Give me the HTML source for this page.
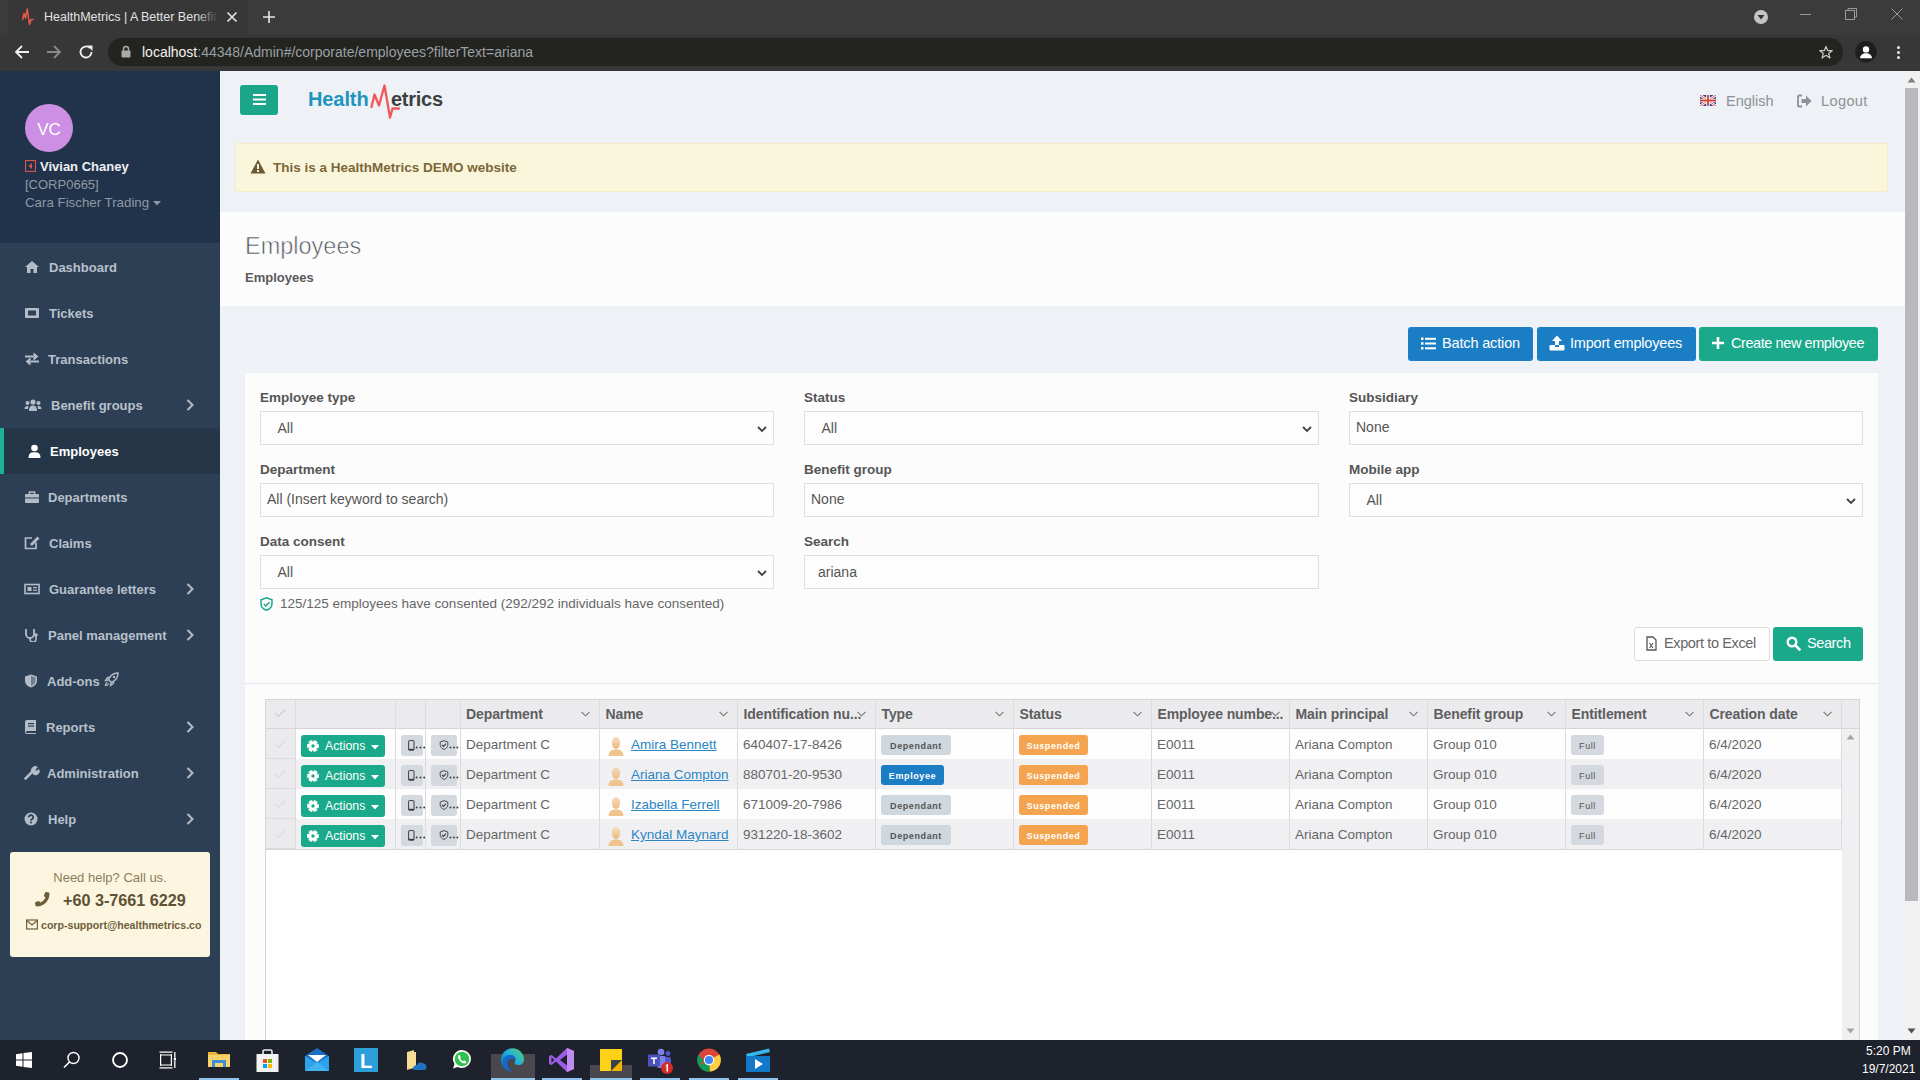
<!DOCTYPE html>
<html><head><meta charset="utf-8">
<style>
*{box-sizing:border-box;margin:0;padding:0}
html,body{width:1920px;height:1080px;overflow:hidden;font-family:"Liberation Sans",sans-serif;background:#f1f3f6}
.a{position:absolute}
.t{position:absolute;white-space:nowrap;line-height:1}
/* chrome */
#tabs{left:0;top:0;width:1920px;height:35px;background:#3a3b3a}
#tool{left:0;top:35px;width:1920px;height:36px;background:#363736}
#url{left:108px;top:38px;width:1735px;height:28px;border-radius:14px;background:#23231f}
/* sidebar */
#side{left:0;top:71px;width:220px;height:969px;background:#2d3f54}
#prof{left:0;top:71px;width:220px;height:172px;background:#20334a}
.mi{position:absolute;left:0;width:220px;height:46px;color:#b8c0cb;font-size:13px;font-weight:bold}
.mi .ic{position:absolute;left:24px;top:16px;width:16px;height:14px}
.mi .tx{position:absolute;left:49px;top:17px;line-height:1}
.mi .ch{position:absolute;left:184px;top:16px;width:12px;height:14px}
/* main */
#main{left:220px;top:71px;width:1685px;height:969px;background:#eef1f5}
#taskbar{left:0;top:1040px;width:1920px;height:40px;background:#1e222c}
.lb{font-size:13.5px;font-weight:bold;color:#555}
.inp{position:absolute;height:34px;border:1px solid #dfdfe2;background:#fdfdfd}
.inp span{position:absolute;top:10px;font-size:14px;color:#555;line-height:1;white-space:nowrap}
.inp .chv{position:absolute;right:6px;top:14px;width:10px;height:7px}
.th{font-size:14px;font-weight:bold;color:#5e5e5e;letter-spacing:-0.1px}
.td{font-size:13.5px;color:#666}
.lk{color:#2a86c4;text-decoration:underline}
.act{left:301px;width:84px;height:22px;border-radius:3px;background:#1aa98b}
.ib{height:20.5px;border-radius:3px;background:#d4d9e0}
.bd{height:20px;border-radius:3px;font-size:9px;font-weight:bold;text-align:center;line-height:22.5px;white-space:nowrap;letter-spacing:0.6px}
</style></head><body>

<div id="tabs" class="a"></div>
<div class="a" style="left:8px;top:0;width:240px;height:35px;background:#363736"></div>
<svg class="a" style="left:19px;top:6px" width="18" height="22" viewBox="19 6 18 22"><path d="M22.5 20L24 13.5L25.5 18L27.2 9L29.5 24.5L31 19.5H33.5" fill="none" stroke="#e85a4a" stroke-width="1.5" stroke-linejoin="round"/></svg>
<div class="t" style="left:44px;top:11px;font-size:12.5px;color:#e3e3e3;width:172px;overflow:hidden">HealthMetrics | A Better Benefits</div>
<div class="a" style="left:196px;top:5px;width:22px;height:25px;background:linear-gradient(90deg,rgba(54,55,54,0),#363736)"></div>
<svg class="a" style="left:226px;top:11px" width="12" height="12" viewBox="0 0 12 12"><path d="M1.5 1.5L10.5 10.5M10.5 1.5L1.5 10.5" stroke="#e8e8e8" stroke-width="1.6"/></svg>
<svg class="a" style="left:262px;top:10px" width="14" height="14" viewBox="0 0 14 14"><path d="M7 1V13M1 7H13" stroke="#e8e8e8" stroke-width="1.6"/></svg>
<svg class="a" style="left:1753px;top:9px" width="16" height="16" viewBox="0 0 16 16"><circle cx="8" cy="8" r="7" fill="#c4c4c4"/><path d="M4.5 6H11.5L8 10.5Z" fill="#333"/></svg>
<div class="a" style="left:1800px;top:14px;width:11px;height:1px;background:#999"></div>
<svg class="a" style="left:1845px;top:8px" width="12" height="12" viewBox="0 0 12 12"><path d="M3 2.5V0.5H11.5V9H9.5" fill="none" stroke="#999" stroke-width="1"/><rect x="0.5" y="2.5" width="9" height="9" fill="none" stroke="#999" stroke-width="1"/></svg>
<svg class="a" style="left:1891px;top:8px" width="12" height="12" viewBox="0 0 12 12"><path d="M0.5 0.5L11.5 11.5M11.5 0.5L0.5 11.5" stroke="#999" stroke-width="1"/></svg>
<div id="tool" class="a"></div>
<svg class="a" style="left:14px;top:44px" width="16" height="16" viewBox="0 0 16 16"><path d="M15 8H2M8 2L2 8L8 14" fill="none" stroke="#f0f0f0" stroke-width="1.8"/></svg>
<svg class="a" style="left:46px;top:44px" width="16" height="16" viewBox="0 0 16 16"><path d="M1 8H14M8 2L14 8L8 14" fill="none" stroke="#8a8a8a" stroke-width="1.8"/></svg>
<svg class="a" style="left:78px;top:44px" width="16" height="16" viewBox="0 0 16 16"><path d="M13.5 8A5.5 5.5 0 1 1 11.8 4" fill="none" stroke="#f0f0f0" stroke-width="1.8"/><path d="M9 1.5H14.5V7Z" fill="#f0f0f0"/></svg>
<div id="url" class="a"></div>
<svg class="a" style="left:121px;top:45px" width="10" height="13" viewBox="0 0 10 13"><path d="M2.5 6V4A2.5 2.5 0 0 1 7.5 4V6" fill="none" stroke="#aaa" stroke-width="1.5"/><rect x="0.5" y="5.5" width="9" height="7" rx="1" fill="#aaa"/></svg>
<div class="t" style="left:142px;top:45px;font-size:14px;color:#f2f2f2">localhost<span style="color:#9aa0a6">:44348/Admin#/corporate/employees?filterText=ariana</span></div>
<svg class="a" style="left:1818px;top:45px" width="16" height="15" viewBox="0 0 16 16"><path d="M8 1.5L9.9 6.1H14.6L10.8 9L12.2 13.8L8 11L3.8 13.8L5.2 9L1.4 6.1H6.1Z" fill="none" stroke="#c8c8c8" stroke-width="1.3" stroke-linejoin="round"/></svg>
<svg class="a" style="left:1855px;top:41px" width="22" height="22" viewBox="0 0 22 22"><circle cx="11" cy="10.7" r="10.7" fill="#1e1e1e"/><circle cx="11" cy="8.4" r="3.2" fill="#fff"/><path d="M5 17.3C5.3 13.8 7.8 12.3 11 12.3S16.7 13.8 17 17.3Z" fill="#fff"/></svg>
<svg class="a" style="left:1895px;top:45px" width="7" height="15" viewBox="0 0 7 15"><circle cx="3.5" cy="2.6" r="1.5" fill="#eee"/><circle cx="3.5" cy="7.6" r="1.5" fill="#eee"/><circle cx="3.5" cy="12.6" r="1.5" fill="#eee"/></svg>

<div id="side" class="a"></div>
<div id="prof" class="a"></div>
<div class="a" style="left:25px;top:104px;width:48px;height:48px;border-radius:50%;background:#cc8fe4"></div>
<div class="t" style="left:25px;top:121px;width:48px;text-align:center;font-size:17px;color:#fff">VC</div>
<svg class="a" style="left:25px;top:160px" width="11" height="12" viewBox="0 0 11 12"><rect x="0.5" y="0.5" width="10" height="11" fill="none" stroke="#d9534f" stroke-width="1.2"/><path d="M7 3L3.5 6L7 9Z" fill="#d9534f"/></svg>
<div class="t" style="left:40px;top:160px;font-size:13px;font-weight:bold;color:#eef0f2">Vivian Chaney</div>
<div class="t" style="left:25px;top:178px;font-size:13px;color:#8f99a5">[CORP0665]</div>
<div class="t" style="left:25px;top:196px;font-size:13.3px;color:#8f99a5">Cara Fischer Trading</div>
<svg class="a" style="left:153px;top:201px" width="8" height="5" viewBox="0 0 8 5"><path d="M0 0H8L4 4.5Z" fill="#8f99a5"/></svg>

<div class="mi" style="top:244px"><svg class="ic" viewBox="0 0 16 14"><path d="M8 1L1 7H3V13H6.5V9H9.5V13H13V7H15Z" fill="#b4bcc8"/></svg><span class="tx" style="left:49px">Dashboard</span></div>
<div class="mi" style="top:290px"><svg class="ic" viewBox="0 0 16 14"><rect x="1" y="2" width="14" height="10" rx="1" fill="#b4bcc8"/><rect x="4" y="4.5" width="8" height="5" fill="#2d3f54"/></svg><span class="tx" style="left:49px">Tickets</span></div>
<div class="mi" style="top:336px"><svg class="ic" viewBox="0 0 16 14"><path d="M1 4.5H12M9.5 1.5L13 4.5L9.5 7.5M15 9.5H4M6.5 6.5L3 9.5L6.5 12.5" fill="none" stroke="#b4bcc8" stroke-width="1.8"/></svg><span class="tx" style="left:48px">Transactions</span></div>
<div class="mi" style="top:382px"><svg class="ic" style="width:18px" viewBox="0 0 18 14"><circle cx="9" cy="4" r="2.6" fill="#b4bcc8"/><circle cx="3.5" cy="5" r="2" fill="#b4bcc8"/><circle cx="14.5" cy="5" r="2" fill="#b4bcc8"/><path d="M5 13C5 9 6.5 7.5 9 7.5S13 9 13 13Z M0.5 11C0.5 8.5 2 7.8 4.5 8L4 11Z M17.5 11C17.5 8.5 16 7.8 13.5 8L14 11Z" fill="#b4bcc8"/></svg><span class="tx" style="left:51px">Benefit groups</span><svg class="ch" viewBox="0 0 12 14"><path d="M3.5 2L8.5 7L3.5 12" fill="none" stroke="#b4bcc8" stroke-width="2"/></svg></div>
<div class="mi" style="top:428px;background:#253649;color:#fff"><div class="a" style="left:0;top:0;width:4px;height:46px;background:#1bb394"></div><svg class="ic" style="left:28px;width:13px" viewBox="0 0 13 14"><circle cx="6.5" cy="4" r="3.3" fill="#fff"/><path d="M0.5 14C0.5 9.5 2.5 8.3 6.5 8.3S12.5 9.5 12.5 14Z" fill="#fff"/></svg><span class="tx" style="left:50px">Employees</span></div>
<div class="mi" style="top:474px"><svg class="ic" viewBox="0 0 16 14"><rect x="1" y="4" width="14" height="9" rx="1" fill="#b4bcc8"/><path d="M5.5 4V2H10.5V4" fill="none" stroke="#b4bcc8" stroke-width="1.5"/><rect x="1" y="7.5" width="14" height="1" fill="#2d3f54"/></svg><span class="tx" style="left:48px">Departments</span></div>
<div class="mi" style="top:520px"><svg class="ic" viewBox="0 0 16 14"><path d="M12 6.5V12.5H1.5V2H8" fill="none" stroke="#b4bcc8" stroke-width="1.7"/><path d="M13.5 0.5L15.5 2.5L8.5 9.5H6.5V7.5Z" fill="#b4bcc8"/></svg><span class="tx" style="left:49px">Claims</span></div>
<div class="mi" style="top:566px"><svg class="ic" viewBox="0 0 16 14"><rect x="1" y="2.5" width="14" height="9" fill="none" stroke="#b4bcc8" stroke-width="1.6"/><rect x="3.5" y="5" width="4" height="4" fill="#b4bcc8"/><rect x="9" y="5" width="4" height="1.2" fill="#b4bcc8"/><rect x="9" y="7.6" width="4" height="1.2" fill="#b4bcc8"/></svg><span class="tx" style="left:49px">Guarantee letters</span><svg class="ch" viewBox="0 0 12 14"><path d="M3.5 2L8.5 7L3.5 12" fill="none" stroke="#b4bcc8" stroke-width="2"/></svg></div>
<div class="mi" style="top:612px"><svg class="ic" viewBox="0 0 16 14"><path d="M2 1V6A4 4 0 0 0 10 6V1" fill="none" stroke="#b4bcc8" stroke-width="1.8"/><path d="M6 10V11A3 3 0 0 0 12 11V8" fill="none" stroke="#b4bcc8" stroke-width="1.6"/><circle cx="12" cy="7" r="1.8" fill="#b4bcc8"/></svg><span class="tx" style="left:48px">Panel management</span><svg class="ch" viewBox="0 0 12 14"><path d="M3.5 2L8.5 7L3.5 12" fill="none" stroke="#b4bcc8" stroke-width="2"/></svg></div>
<div class="mi" style="top:658px"><svg class="ic" viewBox="0 0 16 14"><path d="M7 0.5L13 2.5V6.5C13 10 10.5 12.5 7 13.5C3.5 12.5 1 10 1 6.5V2.5Z" fill="#b4bcc8"/><path d="M7 2V12C9.5 11 11.5 9 11.5 6.5V3.5Z" fill="#2d3f54" opacity=".5"/></svg><span class="tx" style="left:47px">Add-ons</span><svg class="a" style="left:104px;top:14px" width="15" height="15" viewBox="0 0 15 15"><path d="M14 1C9 1 6 4 4.5 7.5L7.5 10.5C11 9 14 6 14 1Z" fill="none" stroke="#b4bcc8" stroke-width="1.5"/><circle cx="10" cy="5" r="1.2" fill="#b4bcc8"/><path d="M4 8L1.5 8.5L3.5 5.5H6M7 11L6.5 13.5L9.5 11.5V9M3.5 10C2 11 1.5 12.5 1.5 13.5C2.5 13.5 4 13 5 11.5" fill="none" stroke="#b4bcc8" stroke-width="1.3"/></svg></div>
<div class="mi" style="top:704px"><svg class="ic" style="width:13px" viewBox="0 0 13 14"><path d="M1 2A2 2 0 0 1 3 0H12V11H3A1 1 0 0 0 3 13H12V14H3A2 2 0 0 1 1 12Z" fill="#b4bcc8"/><rect x="4" y="3" width="6" height="1.2" fill="#2d3f54"/><rect x="4" y="5.5" width="6" height="1.2" fill="#2d3f54"/></svg><span class="tx" style="left:46px">Reports</span><svg class="ch" viewBox="0 0 12 14"><path d="M3.5 2L8.5 7L3.5 12" fill="none" stroke="#b4bcc8" stroke-width="2"/></svg></div>
<div class="mi" style="top:750px"><svg class="ic" viewBox="0 0 16 14"><path d="M1.5 12.5L8 6" stroke="#b4bcc8" stroke-width="2.5" stroke-linecap="round"/><path d="M8.5 7.5A3.8 3.8 0 0 1 13.8 1.2L11.5 3.5L12.5 5L14.8 3A3.8 3.8 0 0 1 8.5 7.5Z" fill="#b4bcc8"/></svg><span class="tx" style="left:47px">Administration</span><svg class="ch" viewBox="0 0 12 14"><path d="M3.5 2L8.5 7L3.5 12" fill="none" stroke="#b4bcc8" stroke-width="2"/></svg></div>
<div class="mi" style="top:796px"><svg class="ic" style="width:14px" viewBox="0 0 14 14"><circle cx="7" cy="7" r="6.5" fill="#b4bcc8"/><path d="M4.8 5.2A2.2 2.2 0 1 1 7.8 7.3C7.2 7.6 7 8 7 8.8" fill="none" stroke="#2e3d52" stroke-width="1.7"/><circle cx="7" cy="10.6" r="1" fill="#2d3f54"/></svg><span class="tx" style="left:48px">Help</span><svg class="ch" viewBox="0 0 12 14"><path d="M3.5 2L8.5 7L3.5 12" fill="none" stroke="#b4bcc8" stroke-width="2"/></svg></div>

<div class="a" style="left:10px;top:852px;width:200px;height:105px;border-radius:3px;background:#fcf6e0"></div>
<div class="t" style="left:10px;top:871px;width:200px;text-align:center;font-size:13px;color:#8c7d5c">Need help? Call us.</div>
<svg class="a" style="left:34px;top:891px" width="16" height="16" viewBox="0 0 16 16"><path d="M14.5 11.2L11.8 10C11.3 9.8 10.8 10 10.5 10.4L9.5 11.6C7.7 10.7 5.3 8.3 4.4 6.5L5.6 5.5C6 5.2 6.2 4.7 6 4.2L4.8 1.5C4.5 1 4 0.8 3.5 1L1.2 1.6C0.7 1.7 0.5 2.2 0.5 2.6C0.5 10 6 15.5 13.4 15.5C13.8 15.5 14.3 15.3 14.4 14.8L15 12.5C15.2 12 15 11.4 14.5 11.2Z" fill="#6d5d3a" transform="scale(-1,1) translate(-16,0)"/></svg>
<div class="t" style="left:63px;top:892px;font-size:16.2px;font-weight:bold;color:#5f5134">+60 3-7661 6229</div>
<svg class="a" style="left:26px;top:919px" width="12" height="11" viewBox="0 0 12 11"><rect x="0.6" y="1" width="10.8" height="9" fill="none" stroke="#6d5d3a" stroke-width="1.2"/><path d="M0.8 1.5L6 6L11.2 1.5" fill="none" stroke="#6d5d3a" stroke-width="1.2"/></svg>
<div class="t" style="left:41px;top:920px;font-size:10.6px;font-weight:bold;color:#6d5d3a">corp-support@healthmetrics.co</div>

<div id="main" class="a"></div>
<div class="a" style="left:240px;top:85px;width:38px;height:30px;border-radius:3px;background:#1ba68b"></div>
<div class="a" style="left:253px;top:94px;width:13px;height:2.2px;background:#fff;box-shadow:0 4.5px 0 #fff,0 9px 0 #fff"></div>
<div class="t" style="left:308px;top:89px;font-size:20px;font-weight:bold;color:#1e95bf;letter-spacing:-0.1px">Health</div>
<div class="t" style="left:391px;top:89px;font-size:20px;font-weight:bold;color:#3d3f42;letter-spacing:-0.25px">etrics</div>
<svg class="a" style="left:368px;top:82px" width="34" height="40" viewBox="368 82 34 40"><path d="M371.5 107L374.5 94.5L379 105.5L384.5 85.5L390 117.5L392.5 108.5H399" fill="none" stroke="#f05858" stroke-width="2.3" stroke-linejoin="round" stroke-linecap="round"/></svg>
<svg class="a" style="left:1700px;top:95px" width="16" height="11" viewBox="0 0 16 11"><rect width="16" height="11" fill="#2b4190"/><path d="M0 0L16 11M16 0L0 11" stroke="#fff" stroke-width="2.6"/><path d="M0 0L16 11M16 0L0 11" stroke="#d33" stroke-width="0.8"/><path d="M8 0V11M0 5.5H16" stroke="#fff" stroke-width="3.6"/><path d="M8 0V11M0 5.5H16" stroke="#d8433a" stroke-width="1.8"/></svg>
<div class="t" style="left:1726px;top:94px;font-size:14.5px;color:#8e9196">English</div>
<svg class="a" style="left:1797px;top:94px" width="15" height="14" viewBox="0 0 15 14"><path d="M5 1.5H2A1 1 0 0 0 1 2.5V11.5A1 1 0 0 0 2 12.5H5" fill="none" stroke="#8e9196" stroke-width="1.8"/><path d="M4.5 5H9V1.5L14.5 7L9 12.5V9H4.5Z" fill="#8e9196"/></svg>
<div class="t" style="left:1821px;top:94px;font-size:14.5px;color:#8e9196;letter-spacing:0.4px">Logout</div>

<div class="a" style="left:235px;top:143px;width:1653px;height:49px;background:#faf6dc;border:1px solid #f6ecc8"></div>
<svg class="a" style="left:250px;top:159px" width="16" height="15" viewBox="0 0 16 15"><path d="M8 0.5L15.5 14.5H0.5Z" fill="#6e5a32"/><rect x="7" y="5" width="2" height="5" fill="#faf6dc"/><rect x="7" y="11" width="2" height="2" fill="#faf6dc"/></svg>
<div class="t" style="left:273px;top:161px;font-size:13.5px;font-weight:bold;color:#7d6738">This is a HealthMetrics DEMO website</div>

<div class="a" style="left:220px;top:212px;width:1685px;height:94px;background:#fcfcfd"></div>
<div class="t" style="left:245px;top:235px;font-size:23.5px;color:#50555a;-webkit-text-stroke:0.6px #fcfcfd">Employees</div>
<div class="t" style="left:245px;top:271px;font-size:13px;font-weight:bold;color:#5a5a5a">Employees</div>

<!-- action buttons -->
<div class="a" style="left:1408px;top:327px;width:125px;height:34px;border-radius:3px;background:#1b7ec4"></div>
<svg class="a" style="left:1421px;top:337px" width="15" height="13" viewBox="0 0 15 13"><rect x="0" y="0.5" width="2.5" height="2.5" fill="#fff"/><rect x="0" y="5.2" width="2.5" height="2.5" fill="#fff"/><rect x="0" y="10" width="2.5" height="2.5" fill="#fff"/><rect x="4" y="0.8" width="11" height="2" fill="#fff"/><rect x="4" y="5.5" width="11" height="2" fill="#fff"/><rect x="4" y="10.3" width="11" height="2" fill="#fff"/></svg>
<div class="t" style="left:1442px;top:336px;font-size:14.5px;color:#fff;letter-spacing:-0.15px">Batch action</div>
<div class="a" style="left:1537px;top:327px;width:159px;height:34px;border-radius:3px;background:#1b7ec4"></div>
<svg class="a" style="left:1549px;top:335px" width="16" height="16" viewBox="0 0 16 16"><path d="M8 0.5L13 6H10V11H6V6H3Z" fill="#fff"/><rect x="0.5" y="10" width="15" height="5.5" rx="1" fill="#fff"/><rect x="6" y="10" width="4" height="2" fill="#1b7ec4"/></svg>
<div class="t" style="left:1570px;top:336px;font-size:14.5px;color:#fff;letter-spacing:-0.2px">Import employees</div>
<div class="a" style="left:1699px;top:327px;width:179px;height:34px;border-radius:3px;background:#1aa98b"></div>
<svg class="a" style="left:1711px;top:336px" width="14" height="14" viewBox="0 0 14 14"><path d="M7 1V13M1 7H13" stroke="#fff" stroke-width="2.6"/></svg>
<div class="t" style="left:1731px;top:336px;font-size:14.5px;color:#fff;letter-spacing:-0.42px">Create new employee</div>

<!-- panel -->
<div class="a" style="left:245px;top:373px;width:1633px;height:700px;background:#fcfcfd"></div>
<div class="t lb" style="left:260px;top:391px">Employee type</div>
<div class="t lb" style="left:804px;top:391px">Status</div>
<div class="t lb" style="left:1349px;top:391px">Subsidiary</div>
<div class="t lb" style="left:260px;top:463px">Department</div>
<div class="t lb" style="left:804px;top:463px">Benefit group</div>
<div class="t lb" style="left:1349px;top:463px">Mobile app</div>
<div class="t lb" style="left:260px;top:535px">Data consent</div>
<div class="t lb" style="left:804px;top:535px">Search</div>

<div class="inp" style="left:260px;top:411px;width:514px"><span style="left:16.5px;top:9px">All</span><svg class="chv" viewBox="0 0 10 7"><path d="M1 1L5 5L9 1" fill="none" stroke="#444" stroke-width="1.8"/></svg></div>
<div class="inp" style="left:804px;top:411px;width:515px"><span style="left:16.5px;top:9px">All</span><svg class="chv" viewBox="0 0 10 7"><path d="M1 1L5 5L9 1" fill="none" stroke="#444" stroke-width="1.8"/></svg></div>
<div class="inp" style="left:1349px;top:411px;width:514px"><span style="left:6px;top:8px">None</span></div>
<div class="inp" style="left:260px;top:483px;width:514px"><span style="left:6px;top:8px">All (Insert keyword to search)</span></div>
<div class="inp" style="left:804px;top:483px;width:515px"><span style="left:6px;top:8px">None</span></div>
<div class="inp" style="left:1349px;top:483px;width:514px"><span style="left:16.5px;top:9px">All</span><svg class="chv" viewBox="0 0 10 7"><path d="M1 1L5 5L9 1" fill="none" stroke="#444" stroke-width="1.8"/></svg></div>
<div class="inp" style="left:260px;top:555px;width:514px"><span style="left:16.5px;top:9px">All</span><svg class="chv" viewBox="0 0 10 7"><path d="M1 1L5 5L9 1" fill="none" stroke="#444" stroke-width="1.8"/></svg></div>
<div class="inp" style="left:804px;top:555px;width:515px"><span style="left:13px;top:9px">ariana</span></div>

<svg class="a" style="left:260px;top:597px" width="13" height="14" viewBox="0 0 13 14"><path d="M6.5 0.8L12 2.8V6.5C12 9.8 9.8 12.2 6.5 13.2C3.2 12.2 1 9.8 1 6.5V2.8Z" fill="none" stroke="#1aa98b" stroke-width="1.5"/><path d="M3.8 7L5.8 9L9.3 5.2" fill="none" stroke="#1aa98b" stroke-width="1.5"/></svg>
<div class="t" style="left:280px;top:597px;font-size:13.5px;color:#666">125/125 employees have consented (292/292 individuals have consented)</div>

<div class="a" style="left:1634px;top:627px;width:136px;height:34px;border-radius:3px;background:#fff;border:1px solid #dedede"></div>
<svg class="a" style="left:1646px;top:636px" width="11" height="15" viewBox="0 0 11 15"><path d="M1 1H7L10 4V14H1Z" fill="none" stroke="#555" stroke-width="1.3"/><path d="M3.5 7L7 12M7 7L3.5 12" stroke="#555" stroke-width="1.1"/></svg>
<div class="t" style="left:1664px;top:636px;font-size:14.5px;color:#666;letter-spacing:-0.38px">Export to Excel</div>
<div class="a" style="left:1773px;top:627px;width:90px;height:34px;border-radius:3px;background:#1aa98b"></div>
<svg class="a" style="left:1786px;top:636px" width="15" height="15" viewBox="0 0 15 15"><circle cx="6" cy="6" r="4.3" fill="none" stroke="#fff" stroke-width="2.4"/><path d="M9.2 9.2L13.5 13.5" stroke="#fff" stroke-width="2.6" stroke-linecap="round"/></svg>
<div class="t" style="left:1807px;top:636px;font-size:14.5px;color:#fff;letter-spacing:-0.4px">Search</div>

<div class="a" style="left:245px;top:683px;width:1633px;height:1px;background:#e4e6ee"></div>
<div class="a" style="left:265px;top:699px;width:1595px;height:400px;background:#fff;border:1px solid #d5d5d8"></div>
<div class="a" style="left:266px;top:700px;width:1593px;height:29px;background:#ebebee;border-bottom:1px solid #d5d5d8"></div>
<div class="a" style="left:296px;top:729px;width:1546px;height:30px;background:#fdfdfd"></div>
<div class="a" style="left:266px;top:729px;width:30px;height:30px;background:#ebebee;border-bottom:1px solid #dcdcdf"></div>
<div class="a" style="left:296px;top:759px;width:1546px;height:30px;background:#f0f0f3"></div>
<div class="a" style="left:266px;top:759px;width:30px;height:30px;background:#ebebee;border-bottom:1px solid #dcdcdf"></div>
<div class="a" style="left:296px;top:789px;width:1546px;height:30px;background:#fdfdfd"></div>
<div class="a" style="left:266px;top:789px;width:30px;height:30px;background:#ebebee;border-bottom:1px solid #dcdcdf"></div>
<div class="a" style="left:296px;top:819px;width:1546px;height:30px;background:#f0f0f3"></div>
<div class="a" style="left:266px;top:819px;width:30px;height:30px;background:#ebebee;border-bottom:1px solid #dcdcdf"></div>
<div class="a" style="left:266px;top:849px;width:1576px;height:1px;background:#d5d5d8"></div>
<div class="a" style="left:295.0px;top:700px;width:1px;height:150px;background:#dcdcdf"></div>
<div class="a" style="left:395.0px;top:700px;width:1px;height:150px;background:#dcdcdf"></div>
<div class="a" style="left:425.0px;top:700px;width:1px;height:150px;background:#dcdcdf"></div>
<div class="a" style="left:459.5px;top:700px;width:1px;height:150px;background:#dcdcdf"></div>
<div class="a" style="left:599.0px;top:700px;width:1px;height:150px;background:#dcdcdf"></div>
<div class="a" style="left:737.0px;top:700px;width:1px;height:150px;background:#dcdcdf"></div>
<div class="a" style="left:875.0px;top:700px;width:1px;height:150px;background:#dcdcdf"></div>
<div class="a" style="left:1013.0px;top:700px;width:1px;height:150px;background:#dcdcdf"></div>
<div class="a" style="left:1151.0px;top:700px;width:1px;height:150px;background:#dcdcdf"></div>
<div class="a" style="left:1289.0px;top:700px;width:1px;height:150px;background:#dcdcdf"></div>
<div class="a" style="left:1427.0px;top:700px;width:1px;height:150px;background:#dcdcdf"></div>
<div class="a" style="left:1565.0px;top:700px;width:1px;height:150px;background:#dcdcdf"></div>
<div class="a" style="left:1703.0px;top:700px;width:1px;height:150px;background:#dcdcdf"></div>
<div class="a" style="left:1841.0px;top:700px;width:1px;height:150px;background:#dcdcdf"></div>
<div class="a" style="left:1842px;top:729px;width:17px;height:311px;background:#f0f0f3"></div>
<svg class="a" style="left:1846px;top:734px" width="9" height="6" viewBox="0 0 9 6"><path d="M0.5 5.5H8.5L4.5 0.5Z" fill="#a3a3a3"/></svg>
<svg class="a" style="left:1846px;top:1028px" width="9" height="6" viewBox="0 0 9 6"><path d="M0.5 0.5H8.5L4.5 5.5Z" fill="#a3a3a3"/></svg>
<svg class="a" style="left:274px;top:708px" width="12" height="10" viewBox="0 0 12 10"><path d="M1 5L4.5 8.5L11 1.5" fill="none" stroke="#d2d2d6" stroke-width="1.5"/></svg>
<div class="t th" style="left:466px;top:707px">Department</div>
<svg class="a" style="left:580.5px;top:711px" width="9" height="6" viewBox="0 0 9 6"><path d="M0.5 0.8L4.5 4.8L8.5 0.8" fill="none" stroke="#777" stroke-width="1.1"/></svg>
<div class="t th" style="left:605.5px;top:707px">Name</div>
<svg class="a" style="left:718.5px;top:711px" width="9" height="6" viewBox="0 0 9 6"><path d="M0.5 0.8L4.5 4.8L8.5 0.8" fill="none" stroke="#777" stroke-width="1.1"/></svg>
<div class="t th" style="left:743.5px;top:707px">Identification nu...</div>
<svg class="a" style="left:856.5px;top:711px" width="9" height="6" viewBox="0 0 9 6"><path d="M0.5 0.8L4.5 4.8L8.5 0.8" fill="none" stroke="#777" stroke-width="1.1"/></svg>
<div class="t th" style="left:881.5px;top:707px">Type</div>
<svg class="a" style="left:994.5px;top:711px" width="9" height="6" viewBox="0 0 9 6"><path d="M0.5 0.8L4.5 4.8L8.5 0.8" fill="none" stroke="#777" stroke-width="1.1"/></svg>
<div class="t th" style="left:1019.5px;top:707px">Status</div>
<svg class="a" style="left:1132.5px;top:711px" width="9" height="6" viewBox="0 0 9 6"><path d="M0.5 0.8L4.5 4.8L8.5 0.8" fill="none" stroke="#777" stroke-width="1.1"/></svg>
<div class="t th" style="left:1157.5px;top:707px">Employee numbe...</div>
<svg class="a" style="left:1270.5px;top:711px" width="9" height="6" viewBox="0 0 9 6"><path d="M0.5 0.8L4.5 4.8L8.5 0.8" fill="none" stroke="#777" stroke-width="1.1"/></svg>
<div class="t th" style="left:1295.5px;top:707px">Main principal</div>
<svg class="a" style="left:1408.5px;top:711px" width="9" height="6" viewBox="0 0 9 6"><path d="M0.5 0.8L4.5 4.8L8.5 0.8" fill="none" stroke="#777" stroke-width="1.1"/></svg>
<div class="t th" style="left:1433.5px;top:707px">Benefit group</div>
<svg class="a" style="left:1546.5px;top:711px" width="9" height="6" viewBox="0 0 9 6"><path d="M0.5 0.8L4.5 4.8L8.5 0.8" fill="none" stroke="#777" stroke-width="1.1"/></svg>
<div class="t th" style="left:1571.5px;top:707px">Entitlement</div>
<svg class="a" style="left:1684.5px;top:711px" width="9" height="6" viewBox="0 0 9 6"><path d="M0.5 0.8L4.5 4.8L8.5 0.8" fill="none" stroke="#777" stroke-width="1.1"/></svg>
<div class="t th" style="left:1709.5px;top:707px">Creation date</div>
<svg class="a" style="left:1822.5px;top:711px" width="9" height="6" viewBox="0 0 9 6"><path d="M0.5 0.8L4.5 4.8L8.5 0.8" fill="none" stroke="#777" stroke-width="1.1"/></svg>
<svg class="a" style="left:274px;top:739px" width="12" height="10" viewBox="0 0 12 10"><path d="M1 5L4.5 8.5L11 1.5" fill="none" stroke="#dcdce0" stroke-width="1.2"/></svg>
<div class="a act" style="top:735px"></div>
<svg class="a" style="left:307px;top:740px" width="12" height="12" viewBox="0 0 12 12"><path d="M11.64 4.28 L11.64 7.72 L9.64 8.10 L9.07 8.86 L10.31 10.02 L7.33 11.75 L6.00 10.20 L5.06 10.09 L4.67 11.75 L1.69 10.02 L2.36 8.10 L1.98 7.23 L0.36 7.72 L0.36 4.28 L2.36 3.90 L2.93 3.14 L1.69 1.98 L4.67 0.25 L6.00 1.80 L6.94 1.91 L7.33 0.25 L10.31 1.98 L9.64 3.90 L10.02 4.77Z" fill="#fff" stroke="#fff" stroke-width="0.6" stroke-linejoin="round"/><circle cx="6" cy="6" r="1.7" fill="#1aa98b"/></svg>
<div class="t" style="left:325px;top:740px;font-size:12.3px;color:#fff">Actions</div>
<svg class="a" style="left:371px;top:745px" width="8" height="5" viewBox="0 0 8 5"><path d="M0 0H8L4 4.5Z" fill="#fff"/></svg>
<div class="a ib" style="left:401px;top:735px;width:22px"></div>
<svg class="a" style="left:408px;top:740px" width="7" height="11" viewBox="0 0 7 11"><rect x="0.6" y="0.6" width="5.4" height="9.6" rx="0.6" fill="none" stroke="#3d3d3d" stroke-width="1"/><rect x="0.6" y="8.8" width="5.4" height="1.4" fill="#3d3d3d"/></svg>
<svg class="a" style="left:415px;top:746px" width="11" height="3" viewBox="0 0 11 3"><circle cx="1.7" cy="1.5" r="0.95" fill="#3a3a3a"/><circle cx="5.5" cy="1.5" r="0.95" fill="#3a3a3a"/><circle cx="9.2" cy="1.5" r="0.95" fill="#3a3a3a"/></svg>
<div class="a ib" style="left:431px;top:735px;width:26px"></div>
<svg class="a" style="left:439px;top:740px" width="10" height="10" viewBox="0 0 9 10"><path d="M4.5 0.6L8.3 2V4.8C8.3 7 6.8 8.7 4.5 9.4C2.2 8.7 0.7 7 0.7 4.8V2Z" fill="none" stroke="#3d3d3d" stroke-width="0.9"/><path d="M2.6 5L4 6.4L6.5 3.7" fill="none" stroke="#3d3d3d" stroke-width="1.1"/></svg>
<svg class="a" style="left:449px;top:746px" width="11" height="3" viewBox="0 0 11 3"><circle cx="1.5" cy="1.5" r="0.95" fill="#3a3a3a"/><circle cx="5" cy="1.5" r="0.95" fill="#3a3a3a"/><circle cx="8.4" cy="1.5" r="0.95" fill="#3a3a3a"/></svg>
<div class="t td" style="left:466px;top:738px">Department C</div>
<svg class="a" style="left:607px;top:735px" width="18" height="22" viewBox="0 0 18 22"><defs><linearGradient id="sk" x1="0" y1="0" x2="0" y2="1"><stop offset="0" stop-color="#f6dcc0"/><stop offset="1" stop-color="#eebc80"/></linearGradient></defs><ellipse cx="9" cy="8" rx="4.2" ry="6" fill="url(#sk)"/><path d="M1.5 21C1.5 16.5 4.5 14.5 9 14.5S16.5 16.5 16.5 21Z" fill="#efc48e"/></svg>
<div class="t td lk" style="left:631px;top:738px">Amira Bennett</div>
<div class="t td" style="left:743px;top:738px">640407-17-8426</div>
<div class="a bd" style="left:881px;top:735px;width:70px;background:#d0d8df;color:#555">Dependant</div>
<div class="a bd" style="left:1019px;top:735px;width:69px;background:#f4a44e;color:#fff">Suspended</div>
<div class="t td" style="left:1157px;top:738px">E0011</div>
<div class="t td" style="left:1295px;top:738px">Ariana Compton</div>
<div class="t td" style="left:1433px;top:738px">Group 010</div>
<div class="a bd" style="left:1571px;top:735px;width:33px;background:#d3d9df;color:#555;font-weight:normal">Full</div>
<div class="t td" style="left:1709px;top:738px">6/4/2020</div>
<svg class="a" style="left:274px;top:769px" width="12" height="10" viewBox="0 0 12 10"><path d="M1 5L4.5 8.5L11 1.5" fill="none" stroke="#dcdce0" stroke-width="1.2"/></svg>
<div class="a act" style="top:765px"></div>
<svg class="a" style="left:307px;top:770px" width="12" height="12" viewBox="0 0 12 12"><path d="M11.64 4.28 L11.64 7.72 L9.64 8.10 L9.07 8.86 L10.31 10.02 L7.33 11.75 L6.00 10.20 L5.06 10.09 L4.67 11.75 L1.69 10.02 L2.36 8.10 L1.98 7.23 L0.36 7.72 L0.36 4.28 L2.36 3.90 L2.93 3.14 L1.69 1.98 L4.67 0.25 L6.00 1.80 L6.94 1.91 L7.33 0.25 L10.31 1.98 L9.64 3.90 L10.02 4.77Z" fill="#fff" stroke="#fff" stroke-width="0.6" stroke-linejoin="round"/><circle cx="6" cy="6" r="1.7" fill="#1aa98b"/></svg>
<div class="t" style="left:325px;top:770px;font-size:12.3px;color:#fff">Actions</div>
<svg class="a" style="left:371px;top:775px" width="8" height="5" viewBox="0 0 8 5"><path d="M0 0H8L4 4.5Z" fill="#fff"/></svg>
<div class="a ib" style="left:401px;top:765px;width:22px"></div>
<svg class="a" style="left:408px;top:770px" width="7" height="11" viewBox="0 0 7 11"><rect x="0.6" y="0.6" width="5.4" height="9.6" rx="0.6" fill="none" stroke="#3d3d3d" stroke-width="1"/><rect x="0.6" y="8.8" width="5.4" height="1.4" fill="#3d3d3d"/></svg>
<svg class="a" style="left:415px;top:776px" width="11" height="3" viewBox="0 0 11 3"><circle cx="1.7" cy="1.5" r="0.95" fill="#3a3a3a"/><circle cx="5.5" cy="1.5" r="0.95" fill="#3a3a3a"/><circle cx="9.2" cy="1.5" r="0.95" fill="#3a3a3a"/></svg>
<div class="a ib" style="left:431px;top:765px;width:26px"></div>
<svg class="a" style="left:439px;top:770px" width="10" height="10" viewBox="0 0 9 10"><path d="M4.5 0.6L8.3 2V4.8C8.3 7 6.8 8.7 4.5 9.4C2.2 8.7 0.7 7 0.7 4.8V2Z" fill="none" stroke="#3d3d3d" stroke-width="0.9"/><path d="M2.6 5L4 6.4L6.5 3.7" fill="none" stroke="#3d3d3d" stroke-width="1.1"/></svg>
<svg class="a" style="left:449px;top:776px" width="11" height="3" viewBox="0 0 11 3"><circle cx="1.5" cy="1.5" r="0.95" fill="#3a3a3a"/><circle cx="5" cy="1.5" r="0.95" fill="#3a3a3a"/><circle cx="8.4" cy="1.5" r="0.95" fill="#3a3a3a"/></svg>
<div class="t td" style="left:466px;top:768px">Department C</div>
<svg class="a" style="left:607px;top:765px" width="18" height="22" viewBox="0 0 18 22"><defs><linearGradient id="sk" x1="0" y1="0" x2="0" y2="1"><stop offset="0" stop-color="#f6dcc0"/><stop offset="1" stop-color="#eebc80"/></linearGradient></defs><ellipse cx="9" cy="8" rx="4.2" ry="6" fill="url(#sk)"/><path d="M1.5 21C1.5 16.5 4.5 14.5 9 14.5S16.5 16.5 16.5 21Z" fill="#efc48e"/></svg>
<div class="t td lk" style="left:631px;top:768px">Ariana Compton</div>
<div class="t td" style="left:743px;top:768px">880701-20-9530</div>
<div class="a bd" style="left:881px;top:765px;width:63px;background:#1b7ec4;color:#fff">Employee</div>
<div class="a bd" style="left:1019px;top:765px;width:69px;background:#f4a44e;color:#fff">Suspended</div>
<div class="t td" style="left:1157px;top:768px">E0011</div>
<div class="t td" style="left:1295px;top:768px">Ariana Compton</div>
<div class="t td" style="left:1433px;top:768px">Group 010</div>
<div class="a bd" style="left:1571px;top:765px;width:33px;background:#d3d9df;color:#555;font-weight:normal">Full</div>
<div class="t td" style="left:1709px;top:768px">6/4/2020</div>
<svg class="a" style="left:274px;top:799px" width="12" height="10" viewBox="0 0 12 10"><path d="M1 5L4.5 8.5L11 1.5" fill="none" stroke="#dcdce0" stroke-width="1.2"/></svg>
<div class="a act" style="top:795px"></div>
<svg class="a" style="left:307px;top:800px" width="12" height="12" viewBox="0 0 12 12"><path d="M11.64 4.28 L11.64 7.72 L9.64 8.10 L9.07 8.86 L10.31 10.02 L7.33 11.75 L6.00 10.20 L5.06 10.09 L4.67 11.75 L1.69 10.02 L2.36 8.10 L1.98 7.23 L0.36 7.72 L0.36 4.28 L2.36 3.90 L2.93 3.14 L1.69 1.98 L4.67 0.25 L6.00 1.80 L6.94 1.91 L7.33 0.25 L10.31 1.98 L9.64 3.90 L10.02 4.77Z" fill="#fff" stroke="#fff" stroke-width="0.6" stroke-linejoin="round"/><circle cx="6" cy="6" r="1.7" fill="#1aa98b"/></svg>
<div class="t" style="left:325px;top:800px;font-size:12.3px;color:#fff">Actions</div>
<svg class="a" style="left:371px;top:805px" width="8" height="5" viewBox="0 0 8 5"><path d="M0 0H8L4 4.5Z" fill="#fff"/></svg>
<div class="a ib" style="left:401px;top:795px;width:22px"></div>
<svg class="a" style="left:408px;top:800px" width="7" height="11" viewBox="0 0 7 11"><rect x="0.6" y="0.6" width="5.4" height="9.6" rx="0.6" fill="none" stroke="#3d3d3d" stroke-width="1"/><rect x="0.6" y="8.8" width="5.4" height="1.4" fill="#3d3d3d"/></svg>
<svg class="a" style="left:415px;top:806px" width="11" height="3" viewBox="0 0 11 3"><circle cx="1.7" cy="1.5" r="0.95" fill="#3a3a3a"/><circle cx="5.5" cy="1.5" r="0.95" fill="#3a3a3a"/><circle cx="9.2" cy="1.5" r="0.95" fill="#3a3a3a"/></svg>
<div class="a ib" style="left:431px;top:795px;width:26px"></div>
<svg class="a" style="left:439px;top:800px" width="10" height="10" viewBox="0 0 9 10"><path d="M4.5 0.6L8.3 2V4.8C8.3 7 6.8 8.7 4.5 9.4C2.2 8.7 0.7 7 0.7 4.8V2Z" fill="none" stroke="#3d3d3d" stroke-width="0.9"/><path d="M2.6 5L4 6.4L6.5 3.7" fill="none" stroke="#3d3d3d" stroke-width="1.1"/></svg>
<svg class="a" style="left:449px;top:806px" width="11" height="3" viewBox="0 0 11 3"><circle cx="1.5" cy="1.5" r="0.95" fill="#3a3a3a"/><circle cx="5" cy="1.5" r="0.95" fill="#3a3a3a"/><circle cx="8.4" cy="1.5" r="0.95" fill="#3a3a3a"/></svg>
<div class="t td" style="left:466px;top:798px">Department C</div>
<svg class="a" style="left:607px;top:795px" width="18" height="22" viewBox="0 0 18 22"><defs><linearGradient id="sk" x1="0" y1="0" x2="0" y2="1"><stop offset="0" stop-color="#f6dcc0"/><stop offset="1" stop-color="#eebc80"/></linearGradient></defs><ellipse cx="9" cy="8" rx="4.2" ry="6" fill="url(#sk)"/><path d="M1.5 21C1.5 16.5 4.5 14.5 9 14.5S16.5 16.5 16.5 21Z" fill="#efc48e"/></svg>
<div class="t td lk" style="left:631px;top:798px">Izabella Ferrell</div>
<div class="t td" style="left:743px;top:798px">671009-20-7986</div>
<div class="a bd" style="left:881px;top:795px;width:70px;background:#d0d8df;color:#555">Dependant</div>
<div class="a bd" style="left:1019px;top:795px;width:69px;background:#f4a44e;color:#fff">Suspended</div>
<div class="t td" style="left:1157px;top:798px">E0011</div>
<div class="t td" style="left:1295px;top:798px">Ariana Compton</div>
<div class="t td" style="left:1433px;top:798px">Group 010</div>
<div class="a bd" style="left:1571px;top:795px;width:33px;background:#d3d9df;color:#555;font-weight:normal">Full</div>
<div class="t td" style="left:1709px;top:798px">6/4/2020</div>
<svg class="a" style="left:274px;top:829px" width="12" height="10" viewBox="0 0 12 10"><path d="M1 5L4.5 8.5L11 1.5" fill="none" stroke="#dcdce0" stroke-width="1.2"/></svg>
<div class="a act" style="top:825px"></div>
<svg class="a" style="left:307px;top:830px" width="12" height="12" viewBox="0 0 12 12"><path d="M11.64 4.28 L11.64 7.72 L9.64 8.10 L9.07 8.86 L10.31 10.02 L7.33 11.75 L6.00 10.20 L5.06 10.09 L4.67 11.75 L1.69 10.02 L2.36 8.10 L1.98 7.23 L0.36 7.72 L0.36 4.28 L2.36 3.90 L2.93 3.14 L1.69 1.98 L4.67 0.25 L6.00 1.80 L6.94 1.91 L7.33 0.25 L10.31 1.98 L9.64 3.90 L10.02 4.77Z" fill="#fff" stroke="#fff" stroke-width="0.6" stroke-linejoin="round"/><circle cx="6" cy="6" r="1.7" fill="#1aa98b"/></svg>
<div class="t" style="left:325px;top:830px;font-size:12.3px;color:#fff">Actions</div>
<svg class="a" style="left:371px;top:835px" width="8" height="5" viewBox="0 0 8 5"><path d="M0 0H8L4 4.5Z" fill="#fff"/></svg>
<div class="a ib" style="left:401px;top:825px;width:22px"></div>
<svg class="a" style="left:408px;top:830px" width="7" height="11" viewBox="0 0 7 11"><rect x="0.6" y="0.6" width="5.4" height="9.6" rx="0.6" fill="none" stroke="#3d3d3d" stroke-width="1"/><rect x="0.6" y="8.8" width="5.4" height="1.4" fill="#3d3d3d"/></svg>
<svg class="a" style="left:415px;top:836px" width="11" height="3" viewBox="0 0 11 3"><circle cx="1.7" cy="1.5" r="0.95" fill="#3a3a3a"/><circle cx="5.5" cy="1.5" r="0.95" fill="#3a3a3a"/><circle cx="9.2" cy="1.5" r="0.95" fill="#3a3a3a"/></svg>
<div class="a ib" style="left:431px;top:825px;width:26px"></div>
<svg class="a" style="left:439px;top:830px" width="10" height="10" viewBox="0 0 9 10"><path d="M4.5 0.6L8.3 2V4.8C8.3 7 6.8 8.7 4.5 9.4C2.2 8.7 0.7 7 0.7 4.8V2Z" fill="none" stroke="#3d3d3d" stroke-width="0.9"/><path d="M2.6 5L4 6.4L6.5 3.7" fill="none" stroke="#3d3d3d" stroke-width="1.1"/></svg>
<svg class="a" style="left:449px;top:836px" width="11" height="3" viewBox="0 0 11 3"><circle cx="1.5" cy="1.5" r="0.95" fill="#3a3a3a"/><circle cx="5" cy="1.5" r="0.95" fill="#3a3a3a"/><circle cx="8.4" cy="1.5" r="0.95" fill="#3a3a3a"/></svg>
<div class="t td" style="left:466px;top:828px">Department C</div>
<svg class="a" style="left:607px;top:825px" width="18" height="22" viewBox="0 0 18 22"><defs><linearGradient id="sk" x1="0" y1="0" x2="0" y2="1"><stop offset="0" stop-color="#f6dcc0"/><stop offset="1" stop-color="#eebc80"/></linearGradient></defs><ellipse cx="9" cy="8" rx="4.2" ry="6" fill="url(#sk)"/><path d="M1.5 21C1.5 16.5 4.5 14.5 9 14.5S16.5 16.5 16.5 21Z" fill="#efc48e"/></svg>
<div class="t td lk" style="left:631px;top:828px">Kyndal Maynard</div>
<div class="t td" style="left:743px;top:828px">931220-18-3602</div>
<div class="a bd" style="left:881px;top:825px;width:70px;background:#d0d8df;color:#555">Dependant</div>
<div class="a bd" style="left:1019px;top:825px;width:69px;background:#f4a44e;color:#fff">Suspended</div>
<div class="t td" style="left:1157px;top:828px">E0011</div>
<div class="t td" style="left:1295px;top:828px">Ariana Compton</div>
<div class="t td" style="left:1433px;top:828px">Group 010</div>
<div class="a bd" style="left:1571px;top:825px;width:33px;background:#d3d9df;color:#555;font-weight:normal">Full</div>
<div class="t td" style="left:1709px;top:828px">6/4/2020</div>

<!-- page scrollbar -->
<div class="a" style="left:1905px;top:71px;width:15px;height:969px;background:#f1f1f1"></div>
<div class="a" style="left:1905px;top:88px;width:13px;height:813px;background:#b9b9bd"></div>
<svg class="a" style="left:1907px;top:77px" width="9" height="6" viewBox="0 0 9 6"><path d="M0.5 5.5H8.5L4.5 0.5Z" fill="#7d7d80"/></svg>
<svg class="a" style="left:1907px;top:1028px" width="9" height="6" viewBox="0 0 9 6"><path d="M0.5 0.5H8.5L4.5 5.5Z" fill="#505053"/></svg>
<div id="taskbar" class="a"></div>
<svg class="a" style="left:16px;top:1052px" width="16" height="16" viewBox="0 0 16 16"><path d="M0 2.2L6.5 1.3V7.5H0Z M7.5 1.1L16 0V7.5H7.5Z M0 8.5H6.5V14.7L0 13.8Z M7.5 8.5H16V16L7.5 14.9Z" fill="#fff"/></svg>
<svg class="a" style="left:63px;top:1051px" width="18" height="18" viewBox="0 0 18 18"><circle cx="10.5" cy="7" r="5.5" fill="none" stroke="#fff" stroke-width="1.4"/><path d="M6.5 11L1 16.5" stroke="#fff" stroke-width="1.6"/></svg>
<svg class="a" style="left:111px;top:1051px" width="18" height="18" viewBox="0 0 18 18"><circle cx="9" cy="9" r="7" fill="none" stroke="#fff" stroke-width="1.8"/></svg>
<svg class="a" style="left:159px;top:1051px" width="18" height="18" viewBox="0 0 18 18"><path d="M0.5 1.2H13.5M0.5 16.8H13.5M1.6 3V15M12.4 3V15M2 4H12M2 14H12" stroke="#fff" stroke-width="1.2" fill="none"/><path d="M15.8 1V6M15.8 10V17" stroke="#fff" stroke-width="1.3"/><rect x="14.8" y="6.5" width="2.2" height="3" fill="#fff"/></svg>
<!-- explorer -->
<svg class="a" style="left:208px;top:1050px" width="22" height="19" viewBox="0 0 22 19"><path d="M0 2H8L10 4H22V17H0Z" fill="#e8b83a"/><rect x="0" y="5" width="22" height="12" fill="#f8d36a"/><path d="M4 10H18V17H15V13H7V17H4Z" fill="#3d8fd8"/></svg>
<div class="a" style="left:199px;top:1078px;width:40px;height:2px;background:#8fc3ef"></div>
<!-- store -->
<svg class="a" style="left:256px;top:1048px" width="23" height="24" viewBox="0 0 23 24"><path d="M7 7V3.5A1.5 1.5 0 0 1 8.5 2H14.5A1.5 1.5 0 0 1 16 3.5V7" fill="none" stroke="#eee" stroke-width="1.6"/><rect x="0.5" y="6" width="22" height="18" fill="#f2f2f2"/><rect x="7" y="11" width="4" height="4" fill="#f25022"/><rect x="12" y="11" width="4" height="4" fill="#7fba00"/><rect x="7" y="16" width="4" height="4" fill="#00a4ef"/><rect x="12" y="16" width="4" height="4" fill="#ffb900"/></svg>
<!-- mail -->
<svg class="a" style="left:305px;top:1048px" width="24" height="23" viewBox="0 0 24 23"><path d="M0 8L12 0L24 8V23H0Z" fill="#1a6fc4"/><path d="M3 7H21L12 14Z" fill="#fff"/><path d="M0 8L12 15L24 8V23H0Z" fill="#2ba3ec"/><path d="M0 23L12 14L24 23Z" fill="#55c0f3" opacity=".6"/></svg>
<!-- L -->
<div class="a" style="left:354px;top:1048px;width:24px;height:24px;background:#2c9fd8"></div>
<div class="t" style="left:360px;top:1051px;font-size:20px;font-weight:bold;color:#fff">L</div>
<!-- onedrive folder -->
<svg class="a" style="left:406px;top:1050px" width="22" height="22" viewBox="0 0 22 22"><path d="M1 2L8 0V18L1 20Z" fill="#f0d28a"/><rect x="1" y="2" width="9" height="16" fill="#f6dc95"/><path d="M7 19C7 16 9 15 11 15C12 12.5 14 12 16 13C18.5 13 20.5 15 20.5 17.5C20.5 19 19.5 20 18 20H8.5C7.5 20 7 19.5 7 19Z" fill="#1d74c6"/></svg>
<!-- whatsapp -->
<svg class="a" style="left:452px;top:1049px" width="20" height="21" viewBox="0 0 20 21"><path d="M10 1A9 9 0 0 1 10 19C8.4 19 7 18.6 5.7 17.9L1 19.5L2.5 15A9 9 0 0 1 10 1Z" fill="#fff"/><circle cx="10" cy="10" r="7.3" fill="#34c04e"/><path d="M6.5 6.5C7 5.8 7.8 6 8 6.5L8.8 8.3C8.9 8.7 8.3 9.2 8.2 9.5C8.9 10.9 9.6 11.6 11 12.3C11.3 12 11.8 11.4 12.2 11.6L14 12.4C14.4 12.7 14.5 13.4 13.8 14C12.5 15 10.5 14.5 8.5 12.5C6.2 10.2 5.5 8 6.5 6.5Z" fill="#fff"/></svg>
<!-- edge -->
<div class="a" style="left:491px;top:1054px;width:44px;height:26px;background:#48484e"></div>
<svg class="a" style="left:500px;top:1048px" width="25" height="24" viewBox="0 0 25 24"><defs><linearGradient id="eg" x1="0" y1="1" x2="1" y2="0"><stop offset="0" stop-color="#0b5cc4"/><stop offset=".55" stop-color="#1fb0e0"/><stop offset="1" stop-color="#5ad36a"/></linearGradient></defs><path d="M1 12A11.5 11.5 0 0 1 24 11.5C24 15 21.5 17 18.5 17C16 17 14.5 16 14.5 14.5C14.5 13.5 15.5 13 15.5 11.5C15.5 9 13 7 10 7C6 7 3 10.5 3 14.5C3 19.5 7.5 23.5 12.5 23.5C6 23.5 1 18.5 1 12Z" fill="url(#eg)"/><path d="M3 14.5C3 10.5 6 7 10 7C13 7 15.5 9 15.5 11.5C13 10 8.5 10.5 7.5 14C6.8 17 8.5 21 12.5 23.5C7.5 23.5 3 19.5 3 14.5Z" fill="#1269c7"/></svg>
<div class="a" style="left:491px;top:1078px;width:44px;height:2px;background:#8fc3ef"></div>
<!-- VS -->
<svg class="a" style="left:549px;top:1048px" width="25" height="24" viewBox="0 0 25 24"><path d="M18 0L25 3V21L18 24L7 13.5L2.5 17L0 16V8L2.5 7L7 10.5Z" fill="#9b5de5"/><path d="M18 6.5V17.5L11 12Z M2.5 9.3V14.7L5.2 12Z" fill="#1c2127"/><path d="M18 0L25 3V21L18 24Z" fill="#c08cf0"/></svg>
<div class="a" style="left:542px;top:1078px;width:40px;height:2px;background:#8fc3ef"></div>
<!-- sticky -->
<div class="a" style="left:590px;top:1065px;width:42px;height:15px;background:#48484e"></div>
<svg class="a" style="left:600px;top:1049px" width="22" height="22" viewBox="0 0 22 22"><rect width="22" height="22" fill="#fcd116"/><path d="M22 11V22H11Z" fill="#f0b400"/><path d="M11 11H22L11 22Z" fill="#3a3f48"/></svg>
<div class="a" style="left:590px;top:1078px;width:42px;height:2px;background:#8fc3ef"></div>
<!-- teams -->
<svg class="a" style="left:647px;top:1048px" width="28" height="26" viewBox="0 0 28 26"><circle cx="14" cy="4" r="3.3" fill="#7b83eb"/><circle cx="21" cy="5.5" r="2.4" fill="#5059c9"/><rect x="10" y="8" width="9" height="12" rx="2" fill="#7b83eb"/><rect x="18" y="9" width="6" height="9" rx="2" fill="#5059c9"/><rect x="1" y="6.5" width="12" height="12" rx="1" fill="#4b53bc"/><path d="M4 9.5H10V11H7.8V16H6.2V11H4Z" fill="#fff"/><circle cx="20" cy="20" r="6" fill="#d42a2a"/><path d="M19.5 16.5L21 16V23.5H19.5V18L18.5 18.5Z" fill="#fff"/></svg>
<div class="a" style="left:640px;top:1078px;width:40px;height:2px;background:#8fc3ef"></div>
<!-- chrome -->
<svg class="a" style="left:697px;top:1048px" width="24" height="24" viewBox="0 0 24 24"><circle cx="12" cy="12" r="11.5" fill="#db4437"/><path d="M12 12L1.6 17.5A11.5 11.5 0 0 0 13 23.5Z" fill="#0f9d58"/><path d="M12 12L13 23.5A11.5 11.5 0 0 0 22.5 6.5Z" fill="#ffcd40"/><path d="M1.6 6.5A11.5 11.5 0 0 0 1.6 17.5L6.5 12.5Z" fill="#0f9d58"/><circle cx="12" cy="12" r="5.2" fill="#fff"/><circle cx="12" cy="12" r="4.1" fill="#4285f4"/></svg>
<div class="a" style="left:689px;top:1078px;width:40px;height:2px;background:#8fc3ef"></div>
<!-- movies -->
<svg class="a" style="left:746px;top:1048px" width="25" height="24" viewBox="0 0 25 24"><path d="M0 6L23 0.5L24 4L1 9.5Z" fill="#35b8f0"/><rect x="0" y="8" width="24" height="16" fill="#1478c8"/><path d="M9 11L17 16L9 21Z" fill="#fff"/></svg>
<div class="a" style="left:738px;top:1078px;width:40px;height:2px;background:#8fc3ef"></div>
<!-- clock -->
<div class="t" style="left:1866px;top:1045px;font-size:12px;color:#fff">5:20 PM</div>
<div class="t" style="left:1862px;top:1063px;font-size:12px;color:#fff">19/7/2021</div>

</body></html>
